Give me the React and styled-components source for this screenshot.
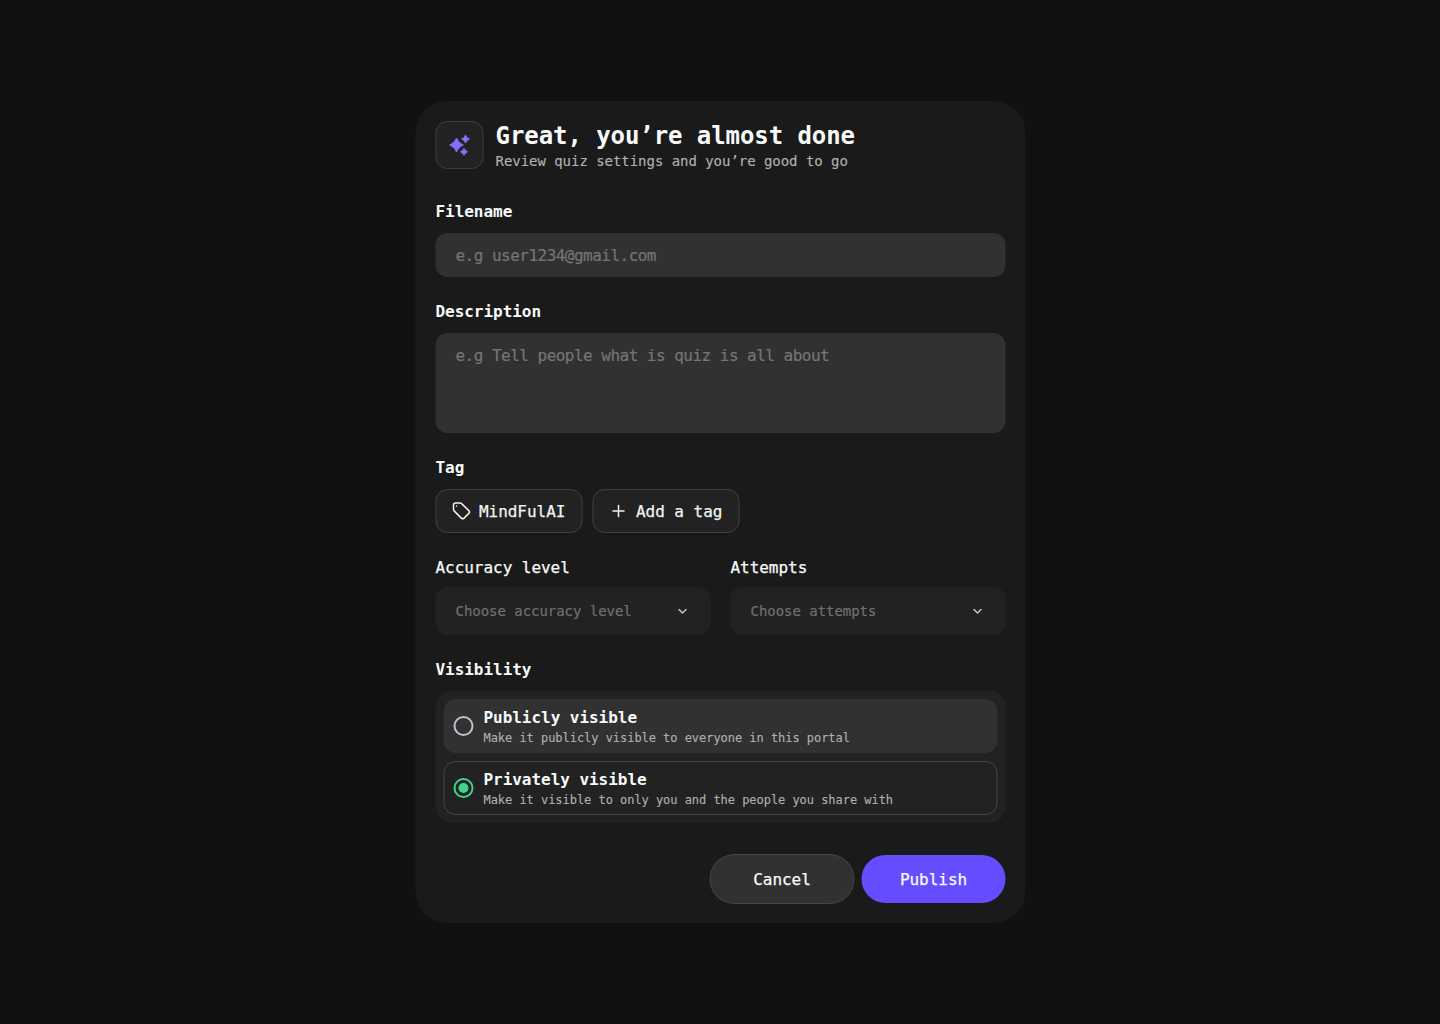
import React, { useState } from "react";
import styled, { createGlobalStyle } from "styled-components";

const GlobalStyle = createGlobalStyle`
  *, *::before, *::after { box-sizing: border-box; }
  body { margin: 0; background: #111111; }
  body, button, input, textarea {
    font-family: "DejaVu Sans Mono", "Liberation Mono", monospace;
    letter-spacing: -0.0025em;
  }
`;

const Page = styled.main`
  min-height: 1024px;
  padding-top: 101px;
  display: flex;
  justify-content: center;
  align-items: flex-start;
  background: #111111;
`;

const Card = styled.form`
  width: 610px;
  height: 822px;
  padding: 20px;
  border-radius: 32px;
  background: #1a1a1a;
  display: flex;
  flex-direction: column;
  gap: 24px;
  transform: translateX(0.5px);
`;

const Header = styled.header`
  display: flex;
  gap: 12px;
  height: 56px;
`;

const IconTile = styled.div`
  width: 48px;
  height: 48px;
  display: grid;
  place-items: center;
  border: 1px solid #3f3f3f;
  border-radius: 12px;
  background: #222222;
`;

const Heading = styled.div`
  display: flex;
  flex-direction: column;
`;

const Title = styled.h1`
  margin: 0;
  font-size: 24px;
  line-height: 30px;
  font-weight: 700;
  letter-spacing: -0.07px;
  color: #f8fafa;
  white-space: nowrap;
`;

const Subtitle = styled.p`
  margin: 0;
  font-size: 14px;
  line-height: 20px;
  color: #b0b0b0;
  -webkit-text-stroke: 0.15px currentColor;
`;

const Field = styled.div`
  display: flex;
  flex-direction: column;
  gap: ${(p) => p.$gap ?? 10}px;
  flex: ${(p) => (p.$grow ? 1 : "none")};
`;

const Label = styled.label`
  font-size: 16px;
  line-height: 22px;
  font-weight: ${(p) => (p.$light ? 400 : 700)};
  color: #f8fafa;
  -webkit-text-stroke: ${(p) => (p.$light ? "0.25px currentColor" : "0")};
`;

const TextInput = styled.input`
  width: 100%;
  height: ${(p) => p.$height ?? 44}px;
  padding: ${(p) => (p.$height ? 13 : 12)}px 20px 12px;
  border: 0;
  border-radius: 12px;
  background: #313131;
  color: #f8fafa;
  font-size: 16px;
  line-height: 20px;
  letter-spacing: -0.52px;
  resize: none;
  outline: none;
  display: block;
  -webkit-text-stroke: 0.2px currentColor;
  &::placeholder { color: #757575; opacity: 1; }
`;

const TagRow = styled.div`
  display: flex;
  gap: 10px;
`;

const TagButton = styled.button`
  width: 147px;
  height: 44px;
  padding: 0 0 0 15px;
  display: flex;
  align-items: center;
  gap: 7.5px;
  border: 1px solid #414141;
  border-radius: 12px;
  background: #222222;
  color: #f1f3f3;
  font-size: 16px;
  white-space: nowrap;
  -webkit-text-stroke: 0.25px currentColor;
`;

const Columns = styled.div`
  display: flex;
  gap: 20px;
`;

const Select = styled.button`
  width: 100%;
  height: 48px;
  padding: 0 20px;
  display: flex;
  align-items: center;
  justify-content: space-between;
  border: 0;
  border-radius: 12px;
  background: #222222;
  color: #707070;
  font-size: 14px;
  -webkit-text-stroke: 0.2px currentColor;
`;

const OptionList = styled.div`
  height: 132px;
  padding: 8px;
  display: flex;
  flex-direction: column;
  gap: 8px;
  border-radius: 16px;
  background: #222222;
`;

const Option = styled.div`
  height: 54px;
  padding: 0 8px;
  display: flex;
  align-items: center;
  gap: 9px;
  border: 1px solid ${(p) => (p.$selected ? "#464646" : "#313131")};
  border-radius: 12px;
  background: ${(p) => (p.$selected ? "#222222" : "#313131")};
  cursor: pointer;
`;

const OptionText = styled.div`
  padding-top: 2px;
  display: flex;
  flex-direction: column;
`;

const OptionTitle = styled.span`
  font-size: 16px;
  line-height: 22px;
  font-weight: 700;
  color: #f8fafa;
`;

const OptionHint = styled.span`
  font-size: 12px;
  line-height: 18px;
  color: #b0b0b0;
  -webkit-text-stroke: 0.12px currentColor;
`;

const Radio = styled.span`
  width: 22px;
  height: 22px;
  display: grid;
  place-items: center;
`;

const RadioRing = styled.span`
  width: 20px;
  height: 20px;
  display: grid;
  place-items: center;
  border: 2px solid ${(p) => (p.$selected ? "#3dd68c" : "#c5bfcf")};
  border-radius: 50%;
  &::after {
    content: "";
    width: 10px;
    height: 10px;
    border-radius: 50%;
    background: ${(p) => (p.$selected ? "#3dd68c" : "transparent")};
  }
`;

const Actions = styled.footer`
  display: flex;
  justify-content: flex-end;
  gap: 8px;
  padding-top: 8px;
`;

const ActionButton = styled.button`
  width: ${(p) => (p.$primary ? 144 : 143)}px;
  height: 48px;
  padding: 0;
  border: 0;
  border-radius: 24px;
  box-shadow: ${(p) => (p.$primary ? "none" : "0 0 0 1px #444444")};
  background: ${(p) => (p.$primary ? "#654dff" : "#313131")};
  color: #f8fafa;
  font-size: 16px;
  -webkit-text-stroke: 0.25px currentColor;
`;

const Sparkles = () => (
  <svg width="24" height="24" viewBox="0 0 24 24" fill="#8370ff" stroke="#8370ff" strokeWidth="0.8" strokeLinejoin="round">
    <path d="M9 5Q10.900 10.100 16 12Q10.900 13.900 9 19Q7.100 13.900 2 12Q7.100 10.100 9 5Z" />
    <path d="M18 1.900Q19.100 4.900 22.100 6Q19.100 7.100 18 10.100Q16.900 7.100 13.900 6Q16.900 4.900 18 1.900Z" />
    <path d="M16.500 15.200Q17.500 17.800 20.100 18.800Q17.500 19.800 16.500 22.400Q15.500 19.800 12.900 18.800Q15.500 17.800 16.500 15.200Z" />
  </svg>
);

const TagIcon = () => (
  <svg width="20" height="20" viewBox="0 0 20 20" fill="none" stroke="currentColor" strokeWidth="1.5" strokeLinecap="round" strokeLinejoin="round">
    <path d="M2 4v4.500a2 2 0 0 0 .6 1.400l7.200 7.200a2 2 0 0 0 2.800 0l4.700-4.700a2 2 0 0 0 0-2.800L10.100 2.600A2 2 0 0 0 8.700 2H4a2 2 0 0 0-2 2Z" />
    <path d="M5.100 5.100h.01" />
  </svg>
);

const PlusIcon = () => (
  <svg width="20" height="20" viewBox="0 0 20 20" fill="none" stroke="currentColor" strokeWidth="1.5" strokeLinecap="round">
    <path d="M4.500 10h11M10 4.500v11" />
  </svg>
);

const Chevron = () => (
  <svg width="16" height="16" viewBox="0 0 16 16" fill="none" stroke="#c5c5c5" strokeWidth="1.5" strokeLinecap="round" strokeLinejoin="round">
    <path d="M4.500 6.500 8 10l3.500-3.500" />
  </svg>
);

const SELECTS = [
  { label: "Accuracy level", placeholder: "Choose accuracy level" },
  { label: "Attempts", placeholder: "Choose attempts" },
];

const OPTIONS = [
  { id: "public", title: "Publicly visible", hint: "Make it publicly visible to everyone in this portal" },
  { id: "private", title: "Privately visible", hint: "Make it visible to only you and the people you share with" },
];

export default function App() {
  const [visibility, setVisibility] = useState("private");
  return (
    <Page>
      <GlobalStyle />
      <Card onSubmit={(e) => e.preventDefault()}>
        <Header>
          <IconTile><Sparkles /></IconTile>
          <Heading>
            <Title>Great, you’re almost done</Title>
            <Subtitle>Review quiz settings and you’re good to go</Subtitle>
          </Heading>
        </Header>
        <Field>
          <Label>Filename</Label>
          <TextInput placeholder="e.g user1234@gmail.com" />
        </Field>
        <Field>
          <Label>Description</Label>
          <TextInput as="textarea" $height={100} placeholder="e.g Tell people what is quiz is all about" />
        </Field>
        <Field>
          <Label>Tag</Label>
          <TagRow>
            <TagButton type="button"><TagIcon />MindFulAI</TagButton>
            <TagButton type="button"><PlusIcon />Add a tag</TagButton>
          </TagRow>
        </Field>
        <Columns>
          {SELECTS.map((s) => (
            <Field key={s.label} $gap={8} $grow>
              <Label $light>{s.label}</Label>
              <Select type="button">{s.placeholder}<Chevron /></Select>
            </Field>
          ))}
        </Columns>
        <Field>
          <Label>Visibility</Label>
          <OptionList>
            {OPTIONS.map((o) => (
              <Option key={o.id} $selected={visibility === o.id} onClick={() => setVisibility(o.id)}>
                <Radio><RadioRing $selected={visibility === o.id} /></Radio>
                <OptionText>
                  <OptionTitle>{o.title}</OptionTitle>
                  <OptionHint>{o.hint}</OptionHint>
                </OptionText>
              </Option>
            ))}
          </OptionList>
        </Field>
        <Actions>
          <ActionButton type="button">Cancel</ActionButton>
          <ActionButton type="submit" $primary>Publish</ActionButton>
        </Actions>
      </Card>
    </Page>
  );
}
